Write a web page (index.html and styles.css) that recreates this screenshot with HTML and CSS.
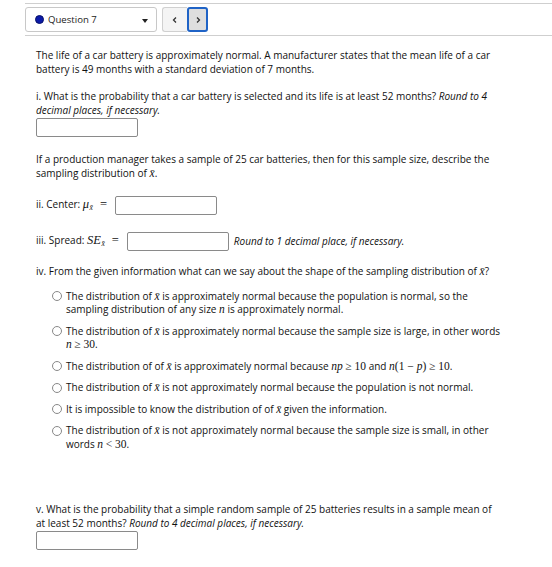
FILE: index.html
```html
<!DOCTYPE html>
<html>
<head>
<meta charset="utf-8">
<link rel="stylesheet" href="styles.css">
</head>
<body>
<div class="topbar">
  <div class="select">
    <span class="dot"></span>
    <span class="qlabel">Question 7</span>
    <span class="caret"></span>
  </div>
  <div class="navgroup">
    <button class="nav prev"><svg width="8" height="8" viewBox="0 0 8 8"><path d="M5 1.5 L2.5 4 L5 6.5" fill="none" stroke="#333" stroke-width="1.3"/></svg></button>
    <button class="nav next"><svg width="8" height="8" viewBox="0 0 8 8"><path d="M3 1.5 L5.5 4 L3 6.5" fill="none" stroke="#333" stroke-width="1.3"/></svg></button>
  </div>
</div>
<div class="content">
  <p class="p1">The life of a car battery is approximately normal. A manufacturer states that the mean life of a car battery is 49 months with a standard deviation of 7 months.</p>
  <p class="p2">i. What is the probability that a car battery is selected and its life is at least 52 months? <em>Round to 4 decimal places, if necessary.</em></p>
  <div class="input wide"></div>
  <p class="p3">If a production manager takes a sample of 25 car batteries, then for this sample size, describe the sampling distribution of <span class="m">x̄</span>.</p>
  <div class="row r-center">
    <span class="lbl">ii. Center: <span class="m big">μ<span class="sb">x̄</span></span><span class="mop eq">=</span></span>
    <div class="input"></div>
  </div>
  <div class="row r-spread">
    <span class="lbl">iii. Spread: <span class="m big">SE<span class="sb">x̄</span></span><span class="mop eq">=</span></span>
    <div class="input"></div>
    <em class="hint">Round to 1 decimal place, if necessary.</em>
  </div>
  <p class="p4">iv. From the given information what can we say about the shape of the sampling distribution of <span class="m">x̄</span>?</p>
  <ul class="opts">
    <li><span class="radio"></span><span>The distribution of <span class="m">x̄</span> is approximately normal because the population is normal, so the sampling distribution of any size <span class="m">n</span> is approximately normal.</span></li>
    <li><span class="radio"></span><span>The distribution of <span class="m">x̄</span> is approximately normal because the sample size is large, in other words <span class="m">n</span> <span class="mop">≥ 30</span>.</span></li>
    <li><span class="radio"></span><span>The distribution of of <span class="m">x̄</span> is approximately normal because <span class="m">np</span> <span class="mop">≥ 10</span> and <span class="m">n</span><span class="mop">(1 − </span><span class="m">p</span><span class="mop">) ≥ 10</span>.</span></li>
    <li><span class="radio"></span><span>The distribution of <span class="m">x̄</span> is not approximately normal because the population is not normal.</span></li>
    <li><span class="radio"></span><span>It is impossible to know the distribution of of <span class="m">x̄</span> given the information.</span></li>
    <li><span class="radio"></span><span>The distribution of <span class="m">x̄</span> is not approximately normal because the sample size is small, in other words <span class="m">n</span> <span class="mop">&lt; 30</span>.</span></li>
  </ul>
  <p class="p5">v. What is the probability that a simple random sample of 25 batteries results in a sample mean of at least 52 months? <em>Round to 4 decimal places, if necessary.</em></p>
  <div class="input wide"></div>
</div>
</body>
</html>
```
FILE: styles.css
```css
* { box-sizing: border-box; }
body {
  margin: 0;
  font-family: "Open Sans", "Noto Sans", sans-serif;
  font-size: 10px;
  line-height: 13.5px;
  color: #111;
  background: #fff;
}
.topbar {
  margin-left: 25px;
  margin-top: 3px;
  height: 33px;
  border-top: 1px solid #cfcfcf;
  border-bottom: 1px solid #cfcfcf;
  display: flex;
  align-items: center;
  gap: 5px;
}
.select {
  width: 132px;
  height: 25px;
  border: 1px solid #c8c8c8;
  border-radius: 3px;
  display: flex;
  align-items: center;
  padding-left: 9px;
  position: relative;
}
.dot {
  width: 9px;
  height: 9px;
  border-radius: 50%;
  background: #0b1aa8;
  border: 1px solid #06106a;
  margin-right: 4px;
}
.qlabel { font-size: 9.6px; color: #222; }
.caret {
  position: absolute;
  right: 8px;
  top: 11px;
  width: 0; height: 0;
  border-left: 3px solid transparent;
  border-right: 3px solid transparent;
  border-top: 4px solid #222;
}
.navgroup { display: flex; }
.nav {
  height: 25px;
  padding: 0;
  margin: 0;
  display: flex;
  align-items: center;
  justify-content: center;
}
.prev {
  width: 25px;
  background: #f4f4f4;
  border: 1px solid #d0d0d0;
  border-right: none;
  border-radius: 3px 0 0 3px;
}
.next {
  width: 21px;
  background: #dedede;
  border: 2px solid #1f63c6;
  border-radius: 3px;
}
.content {
  padding-left: 36px;
  padding-right: 50px;
}
p { margin: 0; }
.p1 { margin-top: 13px; }
.p2 { margin-top: 14px; }
.input {
  width: 102px;
  height: 19px;
  border: 1px solid #8a8a8a;
  border-radius: 2px;
  background: #fff;
}
.wide { margin-top: 1px; }
.p3 { margin-top: 16px; }
.row {
  display: flex;
  align-items: center;
  gap: 8px;
}
.lbl { white-space: nowrap; }
.r-center { margin-top: 16px; }
.r-spread { margin-top: 17px; }
.hint { margin-left: -3px; }
.p4 { margin-top: 14px; }
.m {
  font-family: "Liberation Serif", "DejaVu Serif", serif;
  font-style: italic;
  font-size: 11.5px;
}
.m.big { font-size: 12.5px; }
.mop {
  font-family: "Liberation Serif", "DejaVu Serif", serif;
  font-size: 11.5px;
}
.eq { font-size: 12.5px; margin-left: 7px; }
.sb {
  font-size: 7.5px;
  position: relative;
  top: 2px;
  margin-left: 0.5px;
}
.opts {
  list-style: none;
  margin: 11px 0 0 0;
  padding: 0 0 0 16px;
}
.opts li {
  display: flex;
  align-items: flex-start;
  margin-bottom: 8px;
}
.radio {
  flex: none;
  width: 10px;
  height: 10px;
  border: 1px solid #888;
  border-radius: 50%;
  margin-top: 1.5px;
  margin-right: 4px;
}
.p5 { margin-top: 52px; }
```
